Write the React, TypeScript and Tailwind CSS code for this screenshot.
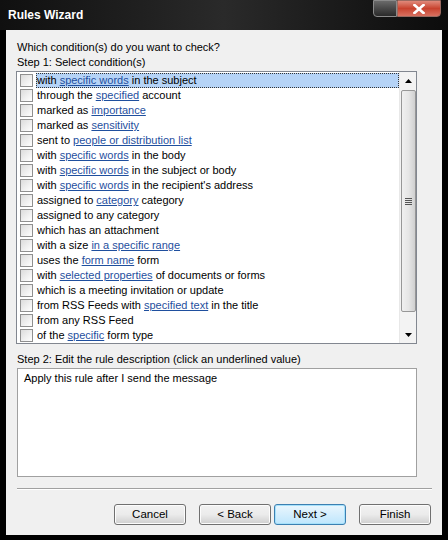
import React from "react";

type Part = string | { l: string };
const rows: Part[][] = [
  ["with ", { l: "specific words" }, " in the subject"],
  ["through the ", { l: "specified" }, " account"],
  ["marked as ", { l: "importance" }],
  ["marked as ", { l: "sensitivity" }],
  ["sent to ", { l: "people or distribution list" }],
  ["with ", { l: "specific words" }, " in the body"],
  ["with ", { l: "specific words" }, " in the subject or body"],
  ["with ", { l: "specific words" }, " in the recipient's address"],
  ["assigned to ", { l: "category" }, " category"],
  ["assigned to any category"],
  ["which has an attachment"],
  ["with a size ", { l: "in a specific range" }],
  ["uses the ", { l: "form name" }, " form"],
  ["with ", { l: "selected properties" }, " of documents or forms"],
  ["which is a meeting invitation or update"],
  ["from RSS Feeds with ", { l: "specified text" }, " in the title"],
  ["from any RSS Feed"],
  ["of the ", { l: "specific" }, " form type"],
];

function Btn({ label, def }: { label: string; def?: boolean }) {
  return (
    <div
      className={`w-[72px] h-[21px] rounded-[3px] border flex items-center justify-center text-[11.5px] text-black ${
        def
          ? "border-[#3c7fb1] bg-gradient-to-b from-[#eaf6fd] to-[#bee6fd] shadow-[inset_0_0_0_1px_#a6e1fb]"
          : "border-[#707070] bg-gradient-to-b from-[#f2f2f2] via-[#ebebeb] to-[#cfcfcf] shadow-[inset_0_0_0_1px_#fcfcfc]"
      }`}
    >
      {label}
    </div>
  );
}

export default function App() {
  return (
    <div
      className="w-[448px] h-[540px] bg-black flex flex-col overflow-hidden"
      style={{ fontFamily: '"Liberation Sans", Arial, sans-serif' }}
    >
      {/* title bar */}
      <div className="relative h-[30px] shrink-0 bg-gradient-to-r from-[#101010] via-[#2a2a2a] to-[#0c0c0c]">
        <div className="absolute left-[8px] top-[6px] text-white font-bold text-[12px]">Rules Wizard</div>
        <div className="absolute left-[373px] top-0 w-[24px] h-[17px] rounded-bl-[4px] border border-[#8a8a8a] bg-gradient-to-b from-[#6a6a6a] to-[#2a2a2a]" />
        <div className="absolute left-[397px] top-0 w-[44px] h-[17px] rounded-br-[4px] border border-[#9a6a60] bg-gradient-to-b from-[#e0897a] via-[#c8422e] to-[#d87060] flex items-center justify-center">
          <svg width="12" height="10" viewBox="0 0 12 10">
            <path d="M1.5 1 L10.5 9 M10.5 1 L1.5 9" stroke="#fff" strokeWidth="2.6" strokeLinecap="square" />
          </svg>
        </div>
      </div>
      {/* body */}
      <div className="flex-1 mx-[6px] mb-[5px] bg-[#f0f0f0] flex flex-col text-[11px] text-black">
        <div className="pl-[11px] pt-[10px] leading-[15px]">Which condition(s) do you want to check?</div>
        <div className="pl-[11px] leading-[15px]">Step 1: Select condition(s)</div>
        <div className="ml-[10px] mr-[25px] mt-[1px] h-[273px] border border-[#828790] bg-white flex">
          <div className="flex-1 pt-[1px] pl-[3px]">
            {rows.map((r, i) => (
              <div key={i} className="h-[15px] flex items-center">
                <div className="w-[13px] h-[13px] border border-[#8f8f8f] bg-gradient-to-br from-[#dcdcdc] to-white mr-[3px] shrink-0" />
                <div
                  className={`h-[15px] flex items-center pl-[1px] whitespace-nowrap ${
                    i === 0 ? "flex-1 bg-[#b5d3f6] outline-1 outline-dotted outline-[#333] -outline-offset-1" : ""
                  }`}
                >
                  {r.map((p, j) =>
                    typeof p === "string" ? (
                      <span key={j} className="whitespace-pre">{p}</span>
                    ) : (
                      <span key={j} className="text-[#1f4f9e] underline whitespace-pre">{p.l}</span>
                    )
                  )}
                </div>
              </div>
            ))}
          </div>
          {/* scrollbar */}
          <div className="w-[17px] bg-[#f3f3f3] border-l border-[#e8e8e8] flex flex-col items-center">
            <div className="h-[17px] flex items-center justify-center">
              <svg width="7" height="4" viewBox="0 0 7 4"><path d="M0 4 L3.5 0 L7 4Z" fill="#000" /></svg>
            </div>
            <div className="w-[15px] h-[222px] mt-[1px] rounded-[2px] border border-[#979797] bg-gradient-to-r from-[#f0f0f0] via-[#e6e6e6] to-[#d0d0d0] flex items-center justify-center">
              <div className="flex flex-col gap-[1px]">
                <div className="w-[7px] h-[1px] bg-[#555]" />
                <div className="w-[7px] h-[1px] bg-[#555]" />
                <div className="w-[7px] h-[1px] bg-[#555]" />
                <div className="w-[7px] h-[1px] bg-[#555]" />
              </div>
            </div>
            <div className="flex-1" />
            <div className="h-[17px] flex items-center justify-center">
              <svg width="7" height="4" viewBox="0 0 7 4"><path d="M0 0 L3.5 4 L7 0Z" fill="#000" /></svg>
            </div>
          </div>
        </div>
        <div className="pl-[11px] mt-[8px] leading-[15px]">Step 2: Edit the rule description (click an underlined value)</div>
        <div className="ml-[11px] mr-[25px] mt-[1px] h-[109px] border border-[#a0a0a0] bg-white pl-[6px] pt-[2px] leading-[15px]">
          Apply this rule after I send the message
        </div>
        <div className="ml-[11px] mr-[10px] mt-[11px] h-[2px] border-t border-[#a0a0a0] border-b border-b-white" />
        <div className="flex justify-end mt-[14px] mr-[11px]">
          <Btn label="Cancel" />
          <div className="w-[13px]" />
          <Btn label="< Back" />
          <div className="w-[3px]" />
          <Btn label="Next >" def />
          <div className="w-[13px]" />
          <Btn label="Finish" />
        </div>
      </div>
    </div>
  );
}
